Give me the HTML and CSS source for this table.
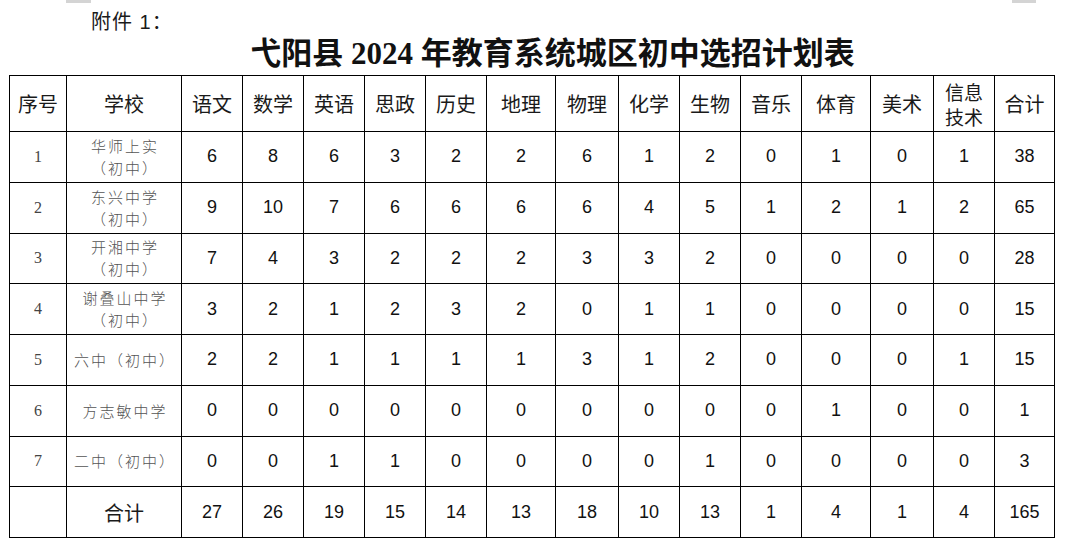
FILE: index.html
```html
<!DOCTYPE html>
<html lang="zh-CN">
<head>
<meta charset="utf-8">
<title>弋阳县2024年教育系统城区初中选招计划表</title>
<link rel="stylesheet" href="styles.css">
</head>
<body>
<div class="page">
  <div class="strip"><span class="mark mark-left"></span><span class="mark mark-right"></span></div>
  <div class="attach">附件 1：</div>
  <h1 class="title">弋阳县 2024 年教育系统城区初中选招计划表</h1>
  <table class="plan">
    <colgroup>
      <col class="c-no"><col class="c-school">
      <col class="c61"><col class="c61"><col class="c61"><col class="c61"><col class="c61">
      <col class="c69"><col class="c63">
      <col class="c61"><col class="c61"><col class="c61">
      <col class="c69"><col class="c63"><col class="c61"><col class="c60">
    </colgroup>
    <thead>
      <tr class="head">
        <th>序号</th><th>学校</th><th>语文</th><th>数学</th><th>英语</th><th>思政</th><th>历史</th><th>地理</th><th>物理</th><th>化学</th><th>生物</th><th>音乐</th><th>体育</th><th>美术</th><th class="two"><span class="ln">信息</span><span class="ln">技术</span></th><th>合计</th>
      </tr>
    </thead>
    <tbody>
      <tr><td class="no">1</td><td class="school">华师上实<br>（初中）</td><td>6</td><td>8</td><td>6</td><td>3</td><td>2</td><td>2</td><td>6</td><td>1</td><td>2</td><td>0</td><td>1</td><td>0</td><td>1</td><td>38</td></tr>
      <tr><td class="no">2</td><td class="school">东兴中学<br>（初中）</td><td>9</td><td>10</td><td>7</td><td>6</td><td>6</td><td>6</td><td>6</td><td>4</td><td>5</td><td>1</td><td>2</td><td>1</td><td>2</td><td>65</td></tr>
      <tr><td class="no">3</td><td class="school">开湘中学<br>（初中）</td><td>7</td><td>4</td><td>3</td><td>2</td><td>2</td><td>2</td><td>3</td><td>3</td><td>2</td><td>0</td><td>0</td><td>0</td><td>0</td><td>28</td></tr>
      <tr><td class="no">4</td><td class="school">谢叠山中学<br>（初中）</td><td>3</td><td>2</td><td>1</td><td>2</td><td>3</td><td>2</td><td>0</td><td>1</td><td>1</td><td>0</td><td>0</td><td>0</td><td>0</td><td>15</td></tr>
      <tr><td class="no">5</td><td class="school">六中（初中）</td><td>2</td><td>2</td><td>1</td><td>1</td><td>1</td><td>1</td><td>3</td><td>1</td><td>2</td><td>0</td><td>0</td><td>0</td><td>1</td><td>15</td></tr>
      <tr><td class="no">6</td><td class="school">方志敏中学</td><td>0</td><td>0</td><td>0</td><td>0</td><td>0</td><td>0</td><td>0</td><td>0</td><td>0</td><td>0</td><td>1</td><td>0</td><td>0</td><td>1</td></tr>
      <tr><td class="no">7</td><td class="school">二中（初中）</td><td>0</td><td>0</td><td>1</td><td>1</td><td>0</td><td>0</td><td>0</td><td>0</td><td>1</td><td>0</td><td>0</td><td>0</td><td>0</td><td>3</td></tr>
      <tr class="total"><td class="no"></td><td class="sum-label">合计</td><td>27</td><td>26</td><td>19</td><td>15</td><td>14</td><td>13</td><td>18</td><td>10</td><td>13</td><td>1</td><td>4</td><td>1</td><td>4</td><td>165</td></tr>
    </tbody>
  </table>
</div>
</body>
</html>
```
FILE: styles.css
```css
html, body {
  margin: 0;
  padding: 0;
  background: #ffffff;
}

.page {
  width: 1065px;
  height: 547px;
  overflow: hidden;
  font-family: "Noto Sans CJK SC", "Noto Sans", sans-serif;
  color: #1a1a1a;
}

.strip {
  display: flex;
  height: 3px;
}

.mark {
  display: block;
  height: 3px;
  background: #d4d4d4;
}

.mark-left {
  width: 25px;
  margin-left: 66px;
}

.mark-right {
  width: 24px;
  margin-left: 921px;
}

.attach {
  margin-top: 9px;
  padding-left: 91px;
  font-size: 20px;
  line-height: 20px;
  height: 20px;
  letter-spacing: 1px;
  font-family: "Liberation Sans", "Noto Sans CJK SC", sans-serif;
  color: #1a1a1a;
}

.title {
  margin: 6px 0 0 0;
  padding-left: 40px;
  text-align: center;
  font-family: "Liberation Serif", "Noto Sans CJK SC", serif;
  font-weight: 700;
  font-size: 31px;
  line-height: 31px;
  height: 31px;
  color: #111;
}

.plan {
  margin: 6px 0 0 9px;
  border-collapse: collapse;
  table-layout: fixed;
  width: 1045px;
}

.c-no { width: 57px; }
.c-school { width: 115px; }
.c61 { width: 61px; }
.c69 { width: 69px; }
.c63 { width: 63px; }
.c60 { width: 60px; }

.plan th,
.plan td {
  border: 1px solid #000;
  padding: 0;
  text-align: center;
  vertical-align: middle;
}

.plan th {
  font-weight: 400;
  font-size: 20px;
  line-height: 25px;
  color: #1a1a1a;
}

.plan th.two {
  font-size: 19px;
}

.ln {
  display: block;
  height: 25px;
  line-height: 25px;
  overflow: hidden;
}

.head {
  height: 56px;
}

.plan tbody tr {
  height: 50.75px;
}

.plan td {
  font-family: "Liberation Sans", Arial, sans-serif;
  font-size: 18px;
  color: #111;
}

.plan td.no {
  font-family: "Liberation Serif", serif;
  font-size: 16px;
  color: #444;
}

.plan td.school {
  font-family: "Noto Sans CJK SC", sans-serif;
  font-weight: 300;
  font-size: 15px;
  line-height: 22px;
  letter-spacing: 2px;
  padding-left: 2px;
  color: #555;
}

.plan td.sum-label {
  font-family: "Noto Sans CJK SC", sans-serif;
  font-size: 20px;
  color: #1a1a1a;
}
```
